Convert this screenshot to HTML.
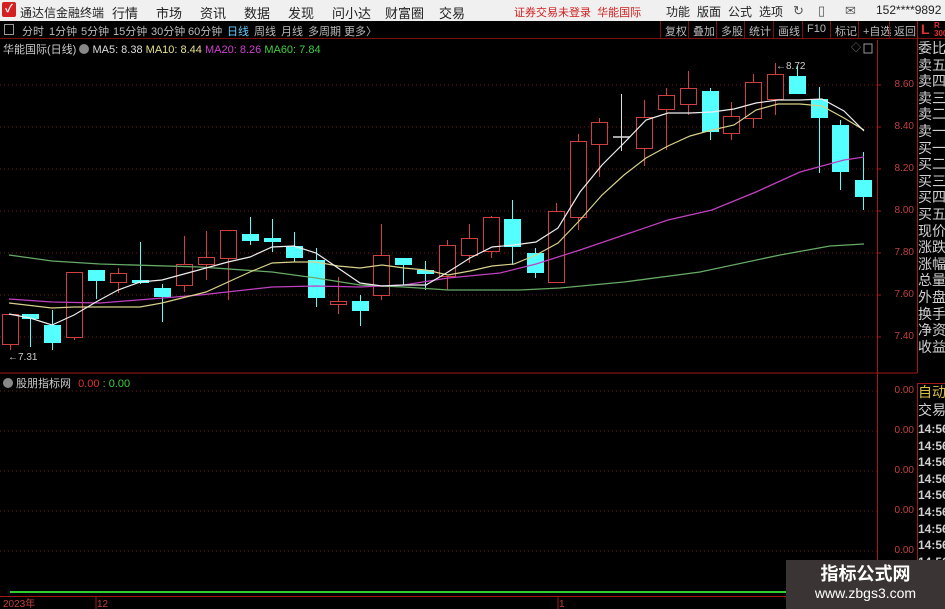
<!DOCTYPE html>
<html><head><meta charset="utf-8">
<style>
*{margin:0;padding:0;box-sizing:border-box}
body{width:945px;height:609px;overflow:hidden;background:#000;font-family:"Liberation Sans","Noto Sans CJK SC",sans-serif;position:relative}
.top{position:absolute;left:0;top:0;width:945px;height:21px;background:#f0f0f0;font-size:13px;color:#222}
.top span{position:absolute;top:3px}
.tb{position:absolute;left:0;top:21px;width:945px;height:18px;background:#000;border-bottom:1px solid #7a1010;font-size:11px;color:#bbb}
.tb span{position:absolute;top:2px}
.rb{position:absolute;top:21px;height:18px;border-left:1px solid #7a1010;font-size:11px;color:#bbb;padding:2px 4px}
.rp{position:absolute;left:917px;top:40px;width:28px;border-left:1px solid #a01818}
.rp div{height:16.6px;font-size:14px;line-height:16px;color:#d0d0d0;white-space:nowrap;overflow:hidden;width:28px}
.ax{position:absolute;left:880px;width:34px;text-align:right;font-size:10px;color:#c04040}
</style></head><body>
<div class="top">
 <div style="position:absolute;left:2px;top:2px;width:14px;height:15px;background:#d42020;border-radius:2px;color:#fff;font-size:11px;text-align:center;line-height:15px;font-weight:bold">✓</div>
 <span style="left:20px;font-size:12px;top:4px">通达信金融终端</span>
 <span style="left:112px">行情</span><span style="left:156px">市场</span><span style="left:200px">资讯</span><span style="left:244px">数据</span><span style="left:288px">发现</span><span style="left:332px">问小达</span><span style="left:385px">财富圈</span><span style="left:439px">交易</span>
 <span style="left:514px;color:#d02020;font-size:11px;top:4px">证券交易未登录&nbsp; 华能国际</span>
 <span style="left:666px;font-size:12px">功能</span><span style="left:697px;font-size:12px">版面</span><span style="left:728px;font-size:12px">公式</span><span style="left:759px;font-size:12px">选项</span>
 <span style="left:793px;color:#555">↻</span><span style="left:818px;color:#555">▯</span><span style="left:845px;color:#555">✉</span>
 <span style="left:876px;font-size:12px">152****9892</span>
</div>
<div class="tb">
 <span style="left:4px;top:3px;width:10px;height:11px;border:1px solid #999"></span>
 <span style="left:22px">分时</span><span style="left:49px">1分钟</span><span style="left:81px">5分钟</span><span style="left:113px">15分钟</span><span style="left:151px">30分钟</span><span style="left:188px">60分钟</span><span style="left:227px;color:#6cf">日线</span><span style="left:254px">周线</span><span style="left:281px">月线</span><span style="left:308px">多周期</span><span style="left:344px">更多〉</span>
</div>
<div class="rb" style="left:660px">复权</div><div class="rb" style="left:688px">叠加</div><div class="rb" style="left:716px">多股</div><div class="rb" style="left:744px">统计</div><div class="rb" style="left:773px">画线</div><div class="rb" style="left:802px">F10</div><div class="rb" style="left:830px">标记</div><div class="rb" style="left:858px">+自选</div><div class="rb" style="left:889px">返回</div>
<div style="position:absolute;left:917px;top:21px;width:28px;height:19px;border-left:1px solid #a01818;color:#e03030;font-weight:bold;font-size:14px;padding-left:3px">L<span style="font-size:8px;position:absolute;left:16px;top:1px;line-height:8px">R<br>300</span></div>
<div style="position:absolute;left:3px;top:41px;font-size:11px;color:#ccc;white-space:nowrap">华能国际(日线) <span style="display:inline-block;width:10px;height:10px;border-radius:5px;background:#888;vertical-align:-1px"></span> <span style="color:#ddd">MA5: 8.38</span> <span style="color:#e6e08a">MA10: 8.44</span> <span style="color:#d040d0">MA20: 8.26</span> <span style="color:#40d040">MA60: 7.84</span></div>
<div style="position:absolute;left:3px;top:375px;font-size:11px;color:#ccc;white-space:nowrap"><span style="display:inline-block;width:10px;height:10px;border-radius:5px;background:#888;vertical-align:-1px"></span> 股朋指标网 <span style="color:#e03030;margin-left:4px">0.00</span> <span style="color:#40d040">: 0.00</span></div>
<svg style="position:absolute;left:0;top:0" width="945" height="609">
<g stroke="#701818" stroke-dasharray="1,3" stroke-width="1">
<line x1="0" y1="85" x2="877" y2="85"/><line x1="0" y1="127" x2="877" y2="127"/><line x1="0" y1="169" x2="877" y2="169"/><line x1="0" y1="211" x2="877" y2="211"/><line x1="0" y1="253" x2="877" y2="253"/><line x1="0" y1="295" x2="877" y2="295"/><line x1="0" y1="337" x2="877" y2="337"/>
<line x1="0" y1="391" x2="877" y2="391"/><line x1="0" y1="431" x2="877" y2="431"/><line x1="0" y1="471" x2="877" y2="471"/><line x1="0" y1="511" x2="877" y2="511"/><line x1="0" y1="551" x2="877" y2="551"/>
</g>
<line x1="0" y1="373" x2="917" y2="373" stroke="#a01818"/>
<line x1="877.5" y1="40" x2="877.5" y2="596" stroke="#a01818"/>
<line x1="0" y1="596.5" x2="877" y2="596.5" stroke="#a01818"/>
<line x1="10" y1="592" x2="945" y2="592" stroke="#3c3" stroke-width="2"/>
<g stroke="#a01818"><line x1="877" y1="85" x2="881" y2="85"/><line x1="877" y1="127" x2="881" y2="127"/><line x1="877" y1="169" x2="881" y2="169"/><line x1="877" y1="211" x2="881" y2="211"/><line x1="877" y1="253" x2="881" y2="253"/><line x1="877" y1="295" x2="881" y2="295"/><line x1="877" y1="337" x2="881" y2="337"/><line x1="96" y1="597" x2="96" y2="609"/><line x1="558" y1="597" x2="558" y2="609"/></g>
<g id="c"></g>
<g fill="none" stroke-width="1.2">
<polyline stroke="#6a6" stroke-width="1.3" points="9,255 52,261 100,264 200,267 272,272 316,278 360,285 404,287 448,290 520,290 560,288 624,282 700,272 780,255 830,246 864,244"/>
<polyline stroke="#c040c0" stroke-width="1.3" points="9,299 52,302 100,303 200,295 272,287 316,286 360,287 404,285 448,278 500,273 536,264 580,250 624,235 668,220 712,210 756,192 800,172 844,160 864,157"/>
<polyline stroke="#d8d08a" points="9,303 52,308 74,307 140,307 162,303 206,292 250,272 272,263 294,262 316,262 338,266 360,268 382,265 404,268 426,270 448,275 470,271 492,266 514,264 536,255 558,243 580,220 602,195 624,175 646,158 668,146 690,136 712,130 734,125 756,110 778,104 800,104 822,106 844,118 864,130"/>
<polyline stroke="#eee" points="9,314 30,318 52,325 74,315 96,302 118,290 140,282 162,280 184,274 206,268 228,262 250,257 272,247 294,246 316,253 338,268 360,283 382,286 404,285 426,285 448,272 470,258 492,247 514,245 536,242 558,228 580,192 602,165 624,143 646,120 668,113 690,113 712,112 734,109 756,103 778,100 800,100 822,99 844,111 864,131"/>
</g>
<g font-size="10" fill="#ccc"><text x="8" y="360">←7.31</text><text x="776" y="69">←8.72</text></g>
<g font-size="10" fill="#c04040"><text x="3" y="607">2023年</text><text x="97" y="607">12</text><text x="559" y="607">1</text></g>
<text x="851" y="51" fill="#888" font-size="10">◇</text><rect x="864" y="44" width="8" height="9" fill="none" stroke="#999"/>
</svg>
<div class="ax" style="top:79px">8.60</div><div class="ax" style="top:121px">8.40</div><div class="ax" style="top:163px">8.20</div><div class="ax" style="top:205px">8.00</div><div class="ax" style="top:247px">7.80</div><div class="ax" style="top:289px">7.60</div><div class="ax" style="top:331px">7.40</div>
<div class="ax" style="top:385px">0.00</div><div class="ax" style="top:425px">0.00</div><div class="ax" style="top:465px">0.00</div><div class="ax" style="top:505px">0.00</div><div class="ax" style="top:545px">0.00</div>
<div class="rp" style="height:333px"><div>委比</div><div>卖五</div><div>卖四</div><div>卖三</div><div>卖二</div><div>卖一</div><div>买一</div><div>买二</div><div>买三</div><div>买四</div><div>买五</div><div>现价</div><div>涨跌</div><div>涨幅</div><div>总量</div><div>外盘</div><div>换手</div><div>净资</div><div>收益</div></div>
<div class="rp" style="top:383px;height:210px;border-top:1px solid #a01818"><div style="color:#d8c040;height:18px">自动</div><div style="height:19px">交易</div><div style="font-size:12px;font-weight:bold">14:56</div><div style="font-size:12px;font-weight:bold">14:56</div><div style="font-size:12px;font-weight:bold">14:56</div><div style="font-size:12px;font-weight:bold">14:56</div><div style="font-size:12px;font-weight:bold">14:56</div><div style="font-size:12px;font-weight:bold">14:56</div><div style="font-size:12px;font-weight:bold">14:56</div><div style="font-size:12px;font-weight:bold">14:56</div><div style="font-size:12px;font-weight:bold">14:56</div></div>
<div style="position:absolute;left:786px;top:560px;width:159px;height:49px;background:#3a3434;color:#fff;text-align:center">
 <div style="font-size:18px;font-weight:bold;margin-top:3px;line-height:22px">指标公式网</div>
 <div style="font-size:14px;line-height:17px">www.zbgs3.com</div>
</div>
<script>
var d=[[2,314,344,314,350,'r'],[22,314,319,314,347,'c'],[44,325,343,310,350,'c'],[66,272,337,272,340,'r'],[88,270,281,270,299,'c'],[110,273,282,268,293,'r'],[132,280,283,242,284,'c'],[154,288,297,284,322,'c'],[176,264,285,236,292,'r'],[198,257,264,231,280,'r'],[220,230,258,230,300,'r'],[242,234,241,217,245,'c'],[264,238,242,219,252,'c'],[286,246,258,232,262,'c'],[308,260,298,248,307,'c'],[330,301,304,277,314,'r'],[352,301,311,295,326,'c'],[373,255,295,224,300,'r'],[395,258,265,258,285,'c'],[417,270,274,261,290,'c'],[439,245,276,240,290,'r'],[461,238,255,224,263,'r'],[483,217,251,216,258,'r'],[504,219,247,200,265,'c'],[527,253,273,248,278,'c'],[548,211,282,203,283,'r'],[570,141,217,134,230,'r'],[591,122,144,118,177,'r'],[613,137,138,94,151,'w'],[636,117,148,100,166,'r'],[658,95,109,88,150,'r'],[680,88,104,71,115,'r'],[702,91,132,88,140,'c'],[723,116,133,102,140,'r'],[745,82,118,74,128,'r'],[767,74,99,63,115,'r'],[789,76,94,66,94,'c'],[811,99,118,87,173,'c'],[832,125,172,120,190,'c'],[855,180,197,152,210,'c']];
var s='';d.forEach(function(a){var x=a[0],cx=x+8.5,col=a[5]=='r'?'#d04040':(a[5]=='c'?'#54ffff':'#ddd');
s+='<line x1="'+cx+'" y1="'+a[3]+'" x2="'+cx+'" y2="'+a[4]+'" stroke="'+col+'"/>';
if(a[5]=='r')s+='<rect x="'+(x+.5)+'" y="'+(a[1]+.5)+'" width="16" height="'+(a[2]-a[1])+'" fill="#000" stroke="'+col+'"/>';
else if(a[5]=='c')s+='<rect x="'+x+'" y="'+a[1]+'" width="17" height="'+Math.max(2,a[2]-a[1])+'" fill="'+col+'"/>';
else s+='<line x1="'+x+'" y1="'+a[1]+'" x2="'+(x+17)+'" y2="'+a[1]+'" stroke="'+col+'" stroke-width="1.5"/>';});
document.getElementById('c').innerHTML=s;
</script>
</body></html>
